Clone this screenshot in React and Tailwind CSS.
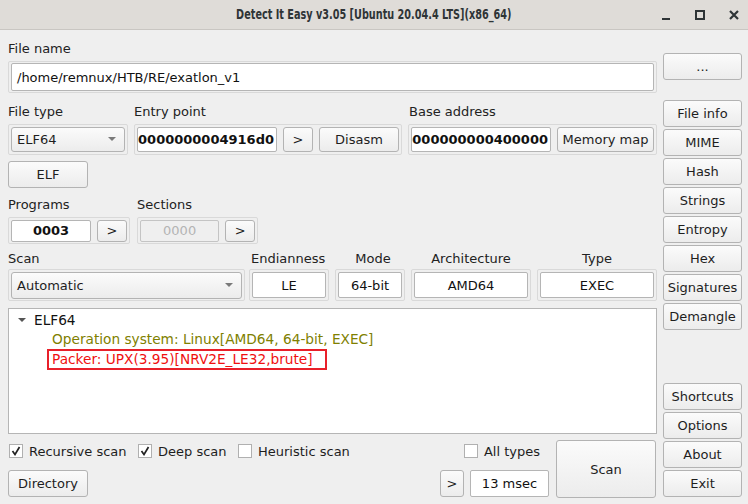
import React from "react";

const font = { fontFamily: '"DejaVu Sans", sans-serif' };

function Btn({ children, className = "" }) {
  return (
    <div
      className={
        "flex items-center justify-center rounded-[3px] border border-[#b3b3b3] bg-gradient-to-b from-[#fbfbfb] to-[#ececec] text-[13px] text-[#1e1e1e] leading-none " +
        className
      }
    >
      {children}
    </div>
  );
}

function Frame({ children, className = "" }) {
  return (
    <div className={"flex items-center gap-[6px] rounded-[2px] border border-[#d9d9d9] p-[2px] " + className}>
      {children}
    </div>
  );
}

function Field({ children, className = "" }) {
  return (
    <div
      className={
        "flex items-center overflow-hidden rounded-[2px] border border-[#b5b5b5] bg-white text-[13px] text-[#111] leading-none " +
        className
      }
    >
      {children}
    </div>
  );
}

function Combo({ children, className = "" }) {
  return (
    <div
      className={
        "flex items-center justify-between rounded-[3px] border border-[#b3b3b3] bg-gradient-to-b from-[#fbfbfb] to-[#ececec] pl-[5px] pr-[8px] text-[13px] text-[#1e1e1e] leading-none " +
        className
      }
    >
      <span>{children}</span>
      <svg width="8" height="5" viewBox="0 0 8 5">
        <path d="M0 0 L8 0 L4 4 Z" fill="#7a7a7a" />
      </svg>
    </div>
  );
}

function Label({ children, className = "" }) {
  return <div className={"text-[13px] leading-[18px] text-[#222] " + className}>{children}</div>;
}

function Check({ checked, children, className = "" }) {
  return (
    <div className={"flex items-center gap-[6px] text-[13px] text-[#1e1e1e] leading-none " + className}>
      <div className="flex h-[14px] w-[14px] items-center justify-center border border-[#b0b0b0] bg-white">
        {checked && (
          <svg width="10" height="10" viewBox="0 0 10 10">
            <path d="M1.5 5 L4 8.5 L8.5 1" stroke="#222" strokeWidth="1.7" fill="none" />
          </svg>
        )}
      </div>
      <span>{children}</span>
    </div>
  );
}

export default function App() {
  return (
    <div className="flex h-[504px] w-[748px] flex-col overflow-hidden bg-[#efefef]" style={font}>
      {/* Title bar */}
      <div className="relative flex h-[30px] shrink-0 items-center justify-center border-b border-[#c9c6c2] bg-[#dfdcd8]">
        <span
          className="text-[14px] font-bold text-[#2e3436] scale-x-[0.77]"
          style={{ fontFamily: '"DejaVu Sans Condensed", sans-serif' }}
        >
          Detect It Easy v3.05 [Ubuntu 20.04.4 LTS](x86_64)
        </span>
        <div className="absolute right-[8px] top-0 flex h-[30px] items-center gap-[22px]">
          <svg width="12" height="12" viewBox="0 0 12 12">
            <rect x="2" y="9" width="8" height="2" fill="#2e3436" />
          </svg>
          <svg width="12" height="12" viewBox="0 0 12 12">
            <rect x="2" y="2" width="8" height="8" fill="none" stroke="#2e3436" strokeWidth="2" />
          </svg>
          <svg width="12" height="12" viewBox="0 0 12 12">
            <path d="M2 2 L10 10 M10 2 L2 10" stroke="#2e3436" strokeWidth="2.2" />
          </svg>
        </div>
      </div>

      {/* Body */}
      <div className="flex flex-1 pl-[8px] pr-[6px]">
        {/* Left column */}
        <div className="flex w-[649px] flex-col">
          <Label className="mt-[10px]">File name</Label>
          <Frame className="mt-[3px] h-[32px] w-[649px]">
            <Field className="h-[28px] flex-1 pl-[5px]">/home/remnux/HTB/RE/exatlon_v1</Field>
          </Frame>

          <div className="mt-[10px] flex">
            <div className="flex w-[126px] flex-col">
              <Label>File type</Label>
              <Frame className="mt-[3px] h-[31px] w-[120px]">
                <Combo className="h-[25px] flex-1">ELF64</Combo>
              </Frame>
            </div>
            <div className="flex w-[274px] flex-col">
              <Label>Entry point</Label>
              <Frame className="mt-[3px] h-[31px] w-[268px]">
                <Field className="h-[25px] w-[140px] shrink-0 justify-end font-bold pr-[2px]">
                  <span className="whitespace-nowrap">00000000004916d0</span>
                </Field>
                <Btn className="h-[25px] w-[30px]">&gt;</Btn>
                <Btn className="h-[25px] w-[80px]">Disasm</Btn>
              </Frame>
            </div>
            <div className="flex w-[249px] flex-col">
              <Label className="pl-[1px]">Base address</Label>
              <Frame className="mt-[3px] h-[31px] w-[249px]">
                <Field className="h-[25px] w-[140px] shrink-0 justify-end font-bold pr-[2px]">
                  <span className="whitespace-nowrap">0000000000400000</span>
                </Field>
                <Btn className="h-[25px] flex-1">Memory map</Btn>
              </Frame>
            </div>
          </div>

          <Btn className="mt-[6px] h-[27px] w-[80px]">ELF</Btn>

          <div className="mt-[8px] flex">
            <div className="flex w-[129px] flex-col">
              <Label>Programs</Label>
              <Frame className="mt-[3px] h-[27px] w-[122px]">
                <Field className="h-[22px] w-[80px] justify-center font-bold">0003</Field>
                <Btn className="h-[22px] w-[30px]">&gt;</Btn>
              </Frame>
            </div>
            <div className="flex w-[122px] flex-col">
              <Label>Sections</Label>
              <Frame className="mt-[3px] h-[27px] w-[121px]">
                <div className="flex h-[22px] w-[80px] items-center justify-center rounded-[2px] border border-[#c4c4c4] bg-[#efefef] text-[13px] leading-none text-[#b4b4b4]">
                  0000
                </div>
                <Btn className="h-[22px] w-[30px]">&gt;</Btn>
              </Frame>
            </div>
          </div>

          <div className="mt-[6px] flex">
            <div className="flex w-[241px] flex-col">
              <Label>Scan</Label>
              <Frame className="mt-[1px] h-[32px] w-[237px]">
                <Combo className="h-[27px] flex-1">Automatic</Combo>
              </Frame>
            </div>
            <div className="flex w-[86px] flex-col">
              <Label className="pl-[2px]">Endianness</Label>
              <Frame className="mt-[1px] h-[32px] w-[80px]">
                <Field className="h-[26px] flex-1 justify-center">LE</Field>
              </Frame>
            </div>
            <div className="flex w-[76px] flex-col items-center">
              <Label className="w-[70px] text-center">Mode</Label>
              <Frame className="mt-[1px] h-[32px] w-[70px] self-start">
                <Field className="h-[26px] flex-1 justify-center">64-bit</Field>
              </Frame>
            </div>
            <div className="flex w-[126px] flex-col">
              <Label className="w-[120px] text-center">Architecture</Label>
              <Frame className="mt-[1px] h-[32px] w-[120px]">
                <Field className="h-[26px] flex-1 justify-center">AMD64</Field>
              </Frame>
            </div>
            <div className="flex w-[120px] flex-col">
              <Label className="w-[120px] text-center">Type</Label>
              <Frame className="mt-[1px] h-[32px] w-[120px]">
                <Field className="h-[26px] flex-1 justify-center">EXEC</Field>
              </Frame>
            </div>
          </div>

          {/* Tree */}
          <div className="mt-[7px] h-[126px] w-[649px] border border-[#b5b5b5] bg-white pt-[2px] text-[13.7px] leading-[19px]">
            <div className="flex items-center">
              <svg className="ml-[9px] mr-[8px]" width="8" height="5" viewBox="0 0 8 5">
                <path d="M0 0 L8 0 L4 4 Z" fill="#555" />
              </svg>
              <span className="text-[#111]">ELF64</span>
            </div>
            <div className="pl-[43px] text-[#808000]">Operation system: Linux[AMD64, 64-bit, EXEC]</div>
            <div className="ml-[38px] w-[280px] border-2 border-[#e8202a] pl-[3px] leading-[17px] text-[#f01010]">
              Packer: UPX(3.95)[NRV2E_LE32,brute]
            </div>
          </div>

          {/* Bottom */}
          <div className="mt-[6px] flex">
            <div className="flex flex-1 flex-col">
              <div className="mt-[4px] flex items-center">
                <Check checked className="ml-[1px] w-[129px]">Recursive scan</Check>
                <Check checked className="w-[100px]">Deep scan</Check>
                <Check>Heuristic scan</Check>
              </div>
              <Btn className="mt-[12px] h-[27px] w-[80px]">Directory</Btn>
            </div>
            <div className="flex flex-col items-end">
              <Check className="mt-[4px] mr-[9px]">All types</Check>
              <div className="mt-[12px] flex gap-[6px]">
                <Btn className="h-[27px] w-[24px]">&gt;</Btn>
                <Field className="h-[27px] w-[79px] justify-center">13 msec</Field>
              </div>
            </div>
            <Btn className="ml-[7px] h-[58px] w-[100px]">Scan</Btn>
            <div className="w-[1px]" />
          </div>
        </div>

        {/* Right column */}
        <div className="ml-[6px] flex w-[79px] flex-col pb-[7px]">
          <Btn className="mt-[23px] h-[27px]">...</Btn>
          <div className="mt-[20px] flex flex-col gap-[2px]">
            {["File info", "MIME", "Hash", "Strings", "Entropy", "Hex", "Signatures", "Demangle"].map((t) => (
              <Btn key={t} className="h-[27px]">
                {t}
              </Btn>
            ))}
          </div>
          <div className="flex-1" />
          <div className="flex flex-col gap-[2px]">
            {["Shortcuts", "Options", "About", "Exit"].map((t) => (
              <Btn key={t} className="h-[27px]">
                {t}
              </Btn>
            ))}
          </div>
        </div>
      </div>
    </div>
  );
}
